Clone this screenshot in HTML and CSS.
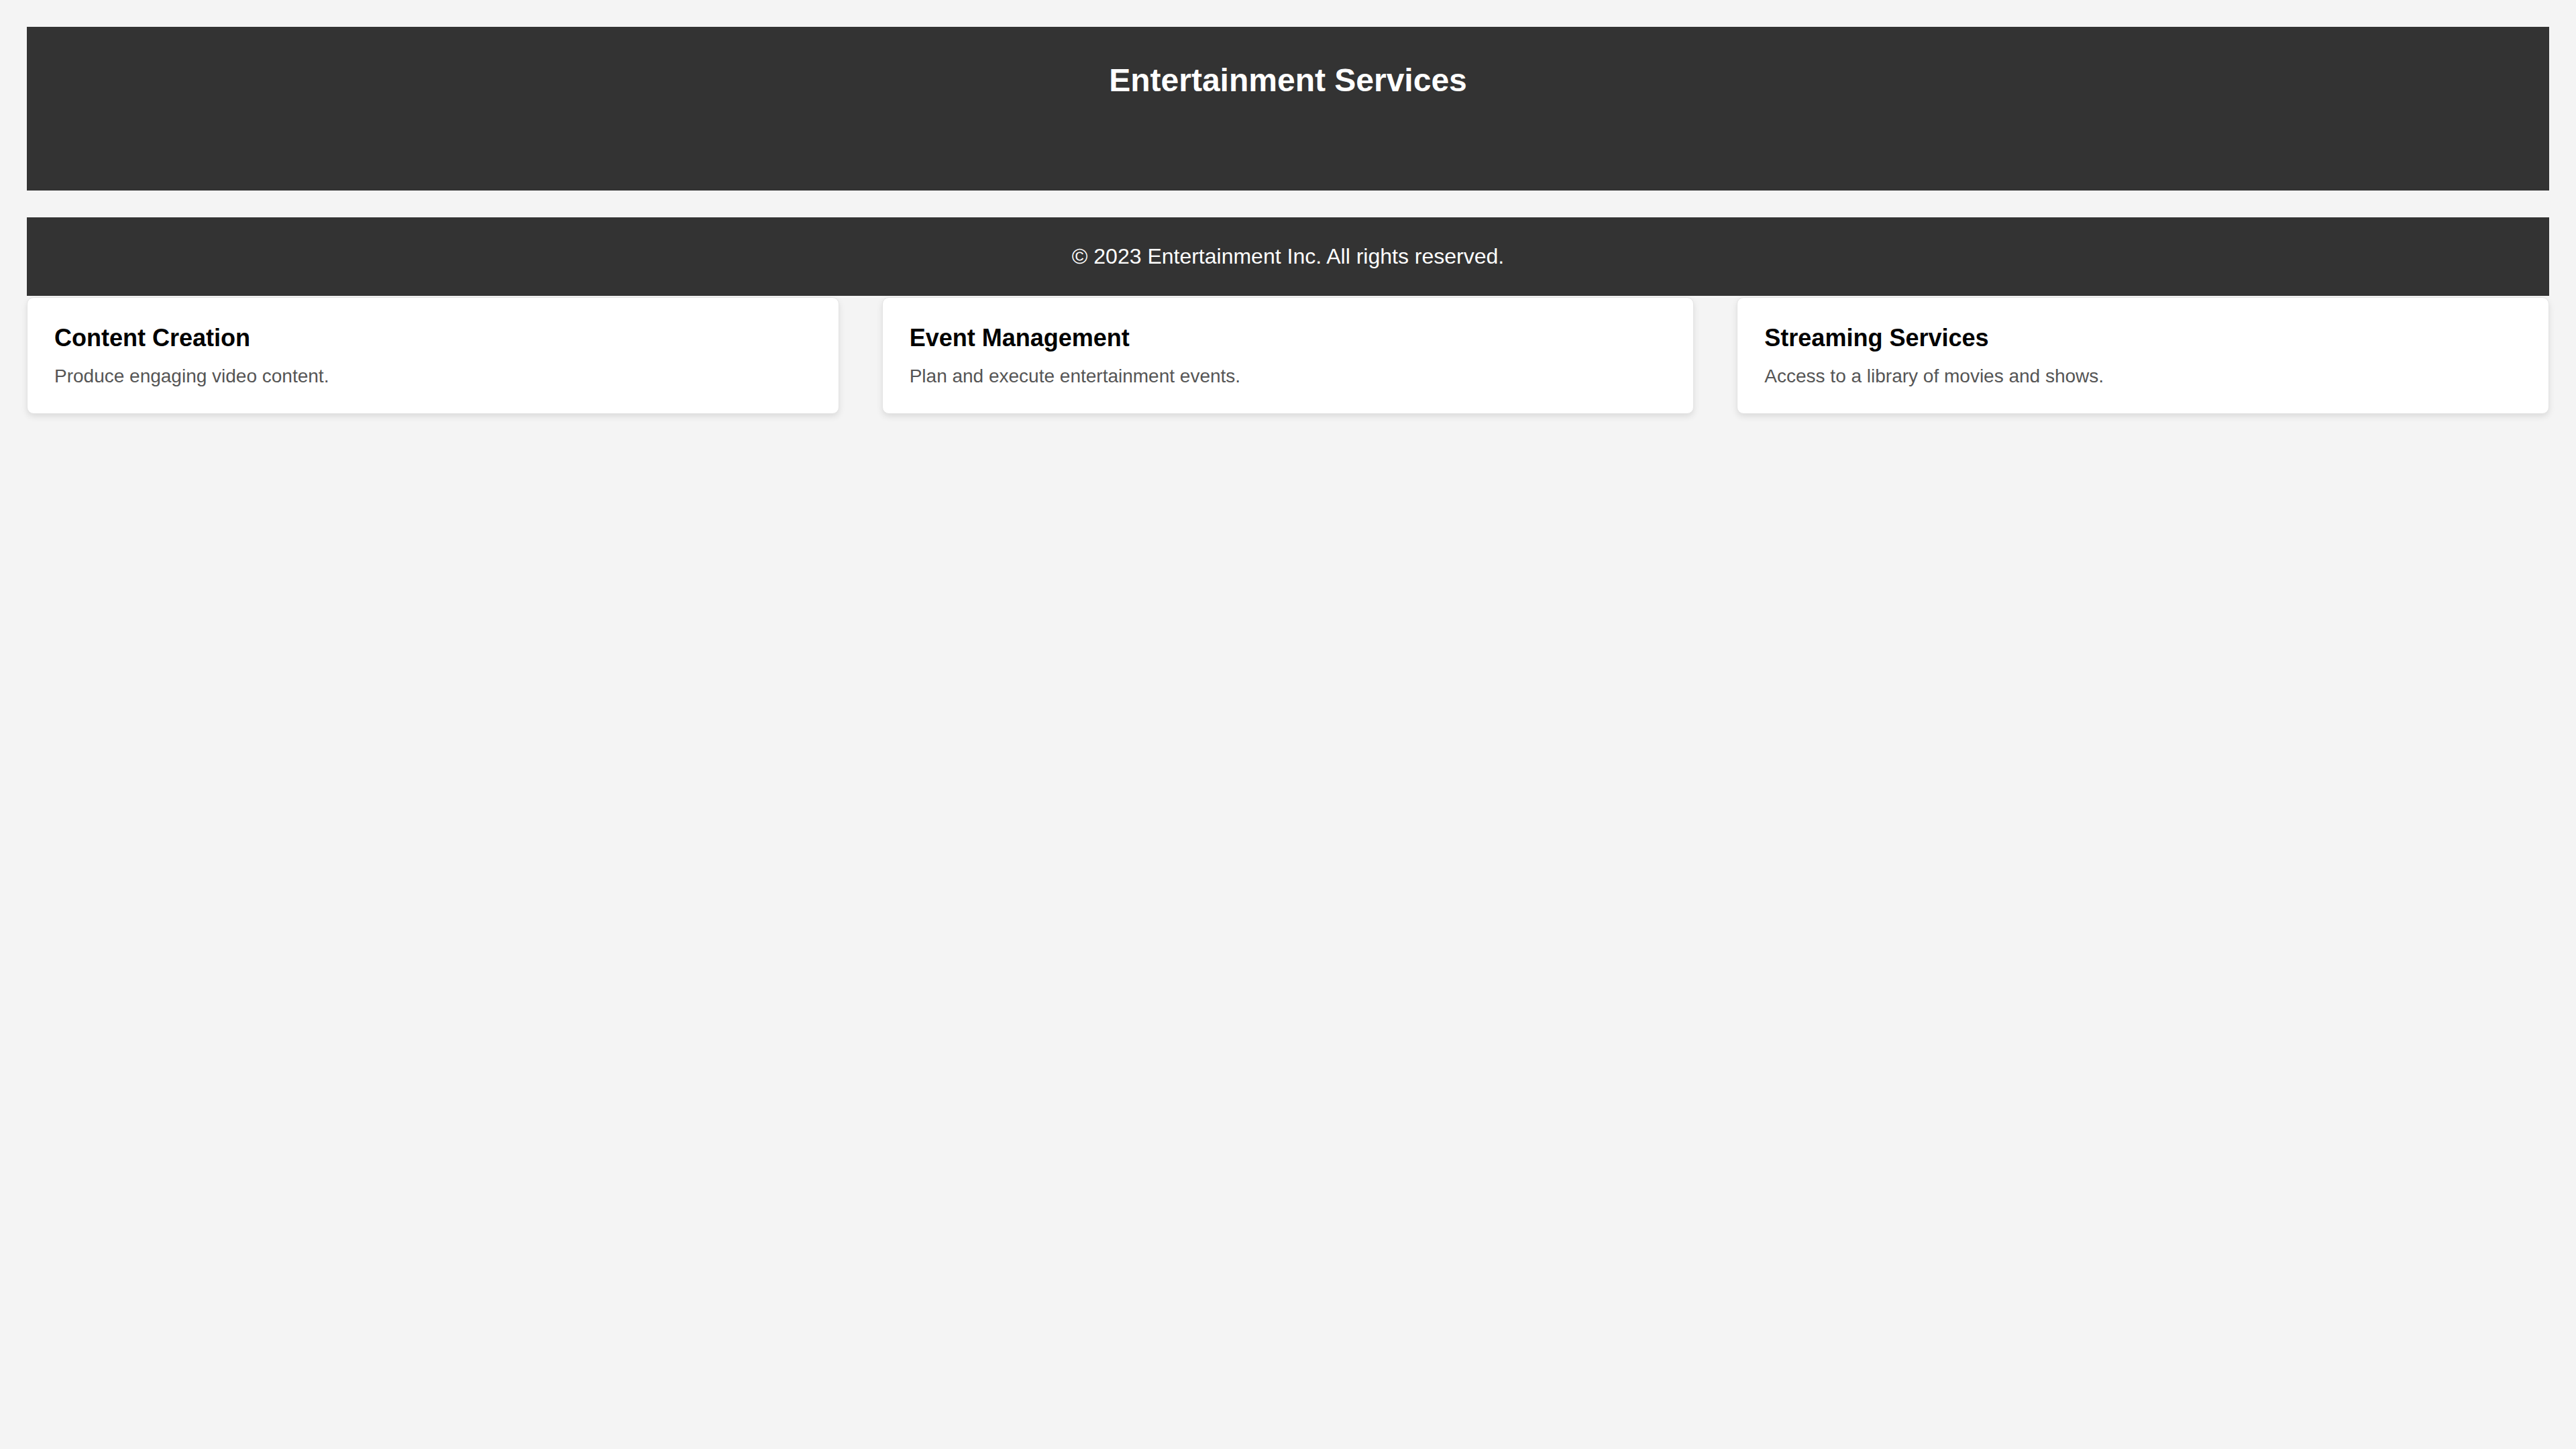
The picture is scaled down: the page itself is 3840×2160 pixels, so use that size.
FILE: index.html
```html
<!DOCTYPE html>
<html lang="en">
<head>
<meta charset="utf-8">
<title>Entertainment Services</title>
<link rel="stylesheet" href="styles.css">
</head>
<body>
<header class="site-header">
  <h1 class="site-title">Entertainment Services</h1>
</header>
<footer class="site-footer">
  <p class="copyright">© 2023 Entertainment Inc. All rights reserved.</p>
</footer>
<main class="services">
  <section class="card">
    <h3 class="card-title">Content Creation</h3>
    <p class="card-text">Produce engaging video content.</p>
  </section>
  <section class="card">
    <h3 class="card-title">Event Management</h3>
    <p class="card-text">Plan and execute entertainment events.</p>
  </section>
  <section class="card">
    <h3 class="card-title">Streaming Services</h3>
    <p class="card-text">Access to a library of movies and shows.</p>
  </section>
</main>
</body>
</html>
```
FILE: styles.css
```css
html, body {
  margin: 0;
  background: #f4f4f4;
}
body {
  padding: 40px;
  font-family: "Liberation Sans", Arial, sans-serif;
  color: #000;
}
.site-header {
  background: #333;
  color: #fff;
  padding: 52px 40px 137px;
  margin-bottom: 40px;
}
.site-title {
  margin: 0;
  font-size: 48px;
  font-weight: bold;
  text-align: center;
  line-height: normal;
}
.site-footer {
  background: #333;
  color: #fff;
  padding: 40px;
  text-align: center;
}
.copyright {
  margin: 0;
  font-size: 32px;
  line-height: normal;
}
.services {
  display: grid;
  grid-template-columns: repeat(3, 1fr);
  gap: 64px;
  margin-top: 2px;
}
.card {
  background: #fff;
  border: 1px solid #e4e4e4;
  border-radius: 10px;
  padding: 39px 40px;
  box-shadow: 0 4px 10px rgba(0, 0, 0, 0.1);
}
.card-title {
  margin: 0 0 20px;
  font-size: 36px;
  font-weight: bold;
  line-height: normal;
}
.card-text {
  margin: 0;
  font-size: 28px;
  color: #555;
  line-height: normal;
}
```
